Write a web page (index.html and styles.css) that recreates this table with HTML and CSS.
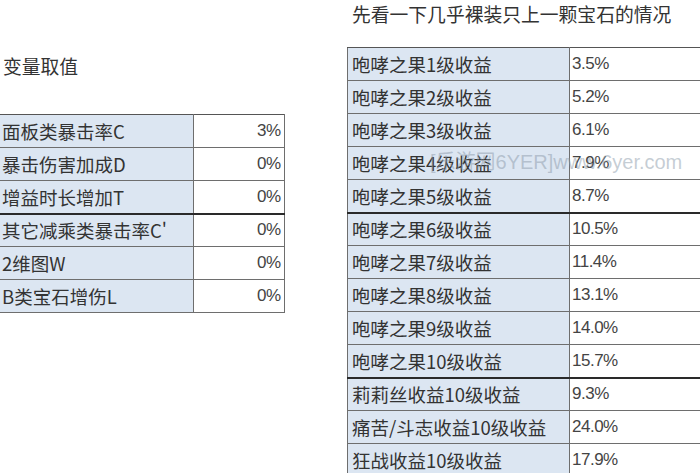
FILE: index.html
```html
<!DOCTYPE html>
<html lang="zh">
<head>
<meta charset="utf-8">
<link rel="stylesheet" href="styles.css">
</head>
<body>
<div class="page">
  <section class="left">
    <h2 class="title left-title">变量取值</h2>
    <table class="grid small">
      <tr><td class="lab">面板类暴击率C</td><td class="val r">3%</td></tr>
      <tr><td class="lab">暴击伤害加成D</td><td class="val r">0%</td></tr>
      <tr class="thick"><td class="lab">增益时长增加T</td><td class="val r">0%</td></tr>
      <tr><td class="lab">其它减乘类暴击率C'</td><td class="val r">0%</td></tr>
      <tr><td class="lab">2维图W</td><td class="val r">0%</td></tr>
      <tr><td class="lab">B类宝石增伤L</td><td class="val r">0%</td></tr>
    </table>
  </section>
  <section class="right">
    <h2 class="title right-title">先看一下几乎裸装只上一颗宝石的情况</h2>
    <table class="grid big">
      <tr><td class="lab">咆哮之果1级收益</td><td class="val">3.5%</td></tr>
      <tr><td class="lab">咆哮之果2级收益</td><td class="val">5.2%</td></tr>
      <tr><td class="lab">咆哮之果3级收益</td><td class="val">6.1%</td></tr>
      <tr><td class="lab">咆哮之果4级收益</td><td class="val">7.9%</td></tr>
      <tr class="thick"><td class="lab">咆哮之果5级收益</td><td class="val">8.7%</td></tr>
      <tr><td class="lab">咆哮之果6级收益</td><td class="val">10.5%</td></tr>
      <tr><td class="lab">咆哮之果7级收益</td><td class="val">11.4%</td></tr>
      <tr><td class="lab">咆哮之果8级收益</td><td class="val">13.1%</td></tr>
      <tr><td class="lab">咆哮之果9级收益</td><td class="val">14.0%</td></tr>
      <tr class="thick"><td class="lab">咆哮之果10级收益</td><td class="val">15.7%</td></tr>
      <tr><td class="lab">莉莉丝收益10级收益</td><td class="val">9.3%</td></tr>
      <tr><td class="lab">痛苦/斗志收益10级收益</td><td class="val">24.0%</td></tr>
      <tr><td class="lab">狂战收益10级收益</td><td class="val">17.9%</td></tr>
    </table>
    <div class="watermark">[乐游网6YER]www.6yer.com</div>
  </section>
</div>
</body>
</html>
```

FILE: styles.css
```css
html, body {
  margin: 0;
  padding: 0;
  background: #ffffff;
  overflow: hidden;
}
body {
  width: 700px;
  height: 473px;
  font-family: "Noto Sans CJK SC", "Noto Sans", sans-serif;
  color: #333333;
}
.page {
  display: flex;
  align-items: flex-start;
  gap: 64px;
}
.left {
  width: 283px;
  flex: none;
}
.right {
  position: relative;
  flex: none;
  width: 353px;
}
.title {
  margin: 0;
  font-weight: normal;
  font-size: 18.8px;
  line-height: 24px;
  color: #333;
  white-space: nowrap;
}
.left-title {
  padding: 54px 0 0 3px;
  height: 60px;
}
.right-title {
  padding: 2px 0 0 5px;
  height: 22px;
}
.grid {
  border-collapse: collapse;
  table-layout: fixed;
  font-size: 18.5px;
}
.grid td {
  height: 33px;
  padding: 0 4px;
  border: 1px solid #6e6e6e;
  line-height: 20px;
  white-space: nowrap;
  overflow: hidden;
  box-sizing: border-box;
}
.grid tr:first-child td {
  border-top-color: #555;
}
.grid tr.thick td {
  border-bottom: 2px solid #2a2a2a;
}
.small {
  width: 284px;
}
.small td.lab {
  width: 193px;
  padding-left: 2px;
  border-left: none;
}
.small td.val {
  width: 91px;
  padding-right: 3px;
}
.big {
  width: 380px;
  margin-top: 23px;
}
.big td.lab {
  width: 222px;
  padding-left: 4px;
}
.big td.val {
  width: 158px;
  padding-left: 2px;
}
.lab {
  background: #dce6f2;
}
.val {
  background: #ffffff;
  font-family: "Liberation Sans", "Noto Sans", sans-serif;
  font-size: 17px;
  letter-spacing: -0.5px;
  color: #444;
}
.r {
  text-align: right;
}
.watermark {
  position: absolute;
  left: 83px;
  top: 146px;
  font-family: "Liberation Sans", "Noto Sans CJK SC", sans-serif;
  font-size: 20px;
  color: rgba(140, 155, 170, 0.5);
  white-space: nowrap;
  pointer-events: none;
}
```
